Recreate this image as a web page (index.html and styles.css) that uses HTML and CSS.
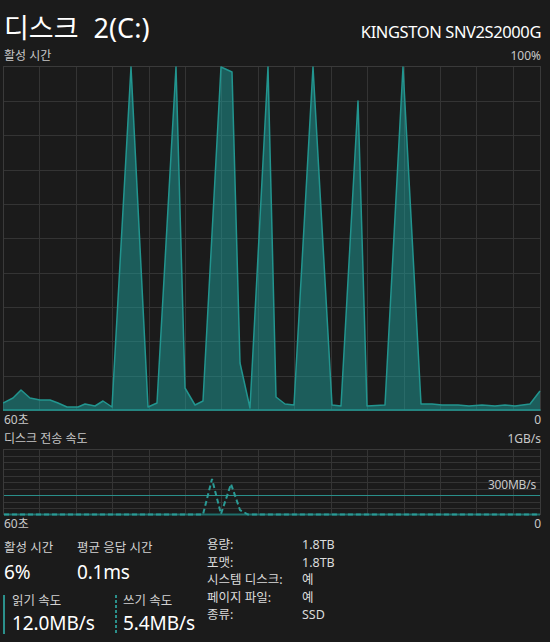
FILE: index.html
```html
<!DOCTYPE html>
<html lang="ko">
<head>
<meta charset="utf-8">
<title>디스크 2(C:)</title>
<link rel="stylesheet" href="styles.css">
</head>
<body>
<main class="page">
  <header class="header">
    <h1 class="title">디스크 2(C:)</h1>
    <div class="model">KINGSTON SNV2S2000G</div>
  </header>

  <div class="axis axis-head"><span>활성 시간</span><span>100%</span></div>
  <svg class="chart chart-main" width="538" height="346" viewBox="3 66 538 346">
    <path class="grid" d="M39.5 66.5V410.5M76.5 66.5V410.5M112.5 66.5V410.5M149.5 66.5V410.5M185.5 66.5V410.5M221.5 66.5V410.5M258.5 66.5V410.5M294.5 66.5V410.5M331.5 66.5V410.5M367.5 66.5V410.5M404.5 66.5V410.5M440.5 66.5V410.5M476.5 66.5V410.5M513.5 66.5V410.5M3.5 101.5H540.5M3.5 135.5H540.5M3.5 170.5H540.5M3.5 204.5H540.5M3.5 238.5H540.5M3.5 273.5H540.5M3.5 307.5H540.5M3.5 341.5H540.5M3.5 376.5H540.5"/>
    <rect class="frame" x="3.5" y="66.5" width="537" height="344"/>
    <polygon class="area" points="3,403 13,398 21,390 30,398 40,400 50,400 58,403 67,407 78,407 85,404 95,406 103,401 112,407 131,67 148,407 157,403 176,67 185,388 195,405 203,401 221,67 232,72 240,363 248,399 250,408 268,67 276,397 285,404 294,405 313,67 332,405 341,406 358,101 367,406 385,405 403,67 421,404 432,404 442,405 458,405 469,406 482,405 495,406 505,405 515,406 530,404 540,391 540,410.5 3,410.5"/>
    <polyline class="line" points="3,403 13,398 21,390 30,398 40,400 50,400 58,403 67,407 78,407 85,404 95,406 103,401 112,407 131,67 148,407 157,403 176,67 185,388 195,405 203,401 221,67 232,72 240,363 248,399 250,408 268,67 276,397 285,404 294,405 313,67 332,405 341,406 358,101 367,406 385,405 403,67 421,404 432,404 442,405 458,405 469,406 482,405 495,406 505,405 515,406 530,404 540,391"/>
    <path class="line" d="M3 410H540.5"/>
  </svg>
  <div class="axis axis-foot"><span>60초</span><span>0</span></div>

  <div class="axis axis-head2"><span>디스크 전송 속도</span><span>1GB/s</span></div>
  <div class="chart-wrap">
    <svg class="chart chart-small" width="538" height="67" viewBox="3 449 538 67">
      <path class="grid" d="M39.5 449.5V514.5M76.5 449.5V514.5M112.5 449.5V514.5M149.5 449.5V514.5M185.5 449.5V514.5M221.5 449.5V514.5M258.5 449.5V514.5M294.5 449.5V514.5M331.5 449.5V514.5M367.5 449.5V514.5M404.5 449.5V514.5M440.5 449.5V514.5M476.5 449.5V514.5M513.5 449.5V514.5M3.5 456.5H540.5M3.5 462.5H540.5M3.5 469.5H540.5M3.5 476.5H540.5M3.5 482.5H540.5M3.5 489.5H540.5M3.5 502.5H540.5M3.5 508.5H540.5"/>
      <rect class="frame" x="3.5" y="449.5" width="537" height="65"/>
      <path class="limit" d="M4 495.5H540"/>
      <path class="read" d="M4 514.5H540"/>
      <polyline class="write" points="4,514.5 203,514.5 212,479 221,514 231,484 240,510 248,514.5 540,514.5"/>
    </svg>
    <span class="limit-label">300MB/s</span>
  </div>
  <div class="axis axis-foot"><span>60초</span><span>0</span></div>

  <section class="stats">
    <div class="perf">
      <div class="perf-row">
        <div class="stat stat-first">
          <div class="stat-label">활성 시간</div>
          <div class="stat-value">6%</div>
        </div>
        <div class="stat">
          <div class="stat-label">평균 응답 시간</div>
          <div class="stat-value">0.1ms</div>
        </div>
      </div>
      <div class="perf-row io-row">
        <div class="io io-read">
          <div class="stat-label">읽기 속도</div>
          <div class="stat-value">12.0MB/s</div>
        </div>
        <div class="io io-write">
          <div class="stat-label">쓰기 속도</div>
          <div class="stat-value">5.4MB/s</div>
        </div>
      </div>
    </div>
    <dl class="props">
      <dt>용량:</dt><dd>1.8TB</dd>
      <dt>포맷:</dt><dd>1.8TB</dd>
      <dt>시스템 디스크:</dt><dd>예</dd>
      <dt>페이지 파일:</dt><dd>예</dd>
      <dt>종류:</dt><dd>SSD</dd>
    </dl>
  </section>
</main>
</body>
</html>
```

FILE: styles.css
```css
html, body {
  margin: 0;
  background: #1b1b1b;
}

body {
  color: #ffffff;
  font-family: "Segoe UI", "Noto Sans", "Noto Sans CJK KR", sans-serif;
  overflow: hidden;
}

.page {
  width: 538px;
  padding: 0 9px 0 3px;
}

.header {
  display: flex;
  justify-content: space-between;
  align-items: baseline;
  height: 48px;
  box-sizing: border-box;
  padding-top: 10px;
}

.title {
  margin: 0 0 0 1px;
  font-size: 27px;
  font-weight: 400;
  line-height: 36px;
  word-spacing: 8px;
  white-space: nowrap;
}

.model {
  font-size: 16.5px;
  line-height: 22px;
  letter-spacing: -0.4px;
  color: #ffffff;
  white-space: nowrap;
}

.axis {
  display: flex;
  justify-content: space-between;
  font-size: 12px;
  line-height: 16px;
  height: 16px;
  color: #c8c8c8;
  padding-left: 1px;
}

.axis-head2 {
  margin-top: 3px;
}

.chart {
  display: block;
}

.chart-main {
  margin-top: 2px;
}

.chart-wrap {
  position: relative;
  margin-top: 2px;
  width: 538px;
  height: 67px;
}

.grid {
  fill: none;
  stroke: #343434;
  stroke-width: 1;
}

.frame {
  fill: none;
  stroke: #3a3a3a;
  stroke-width: 1;
}

.area {
  fill: rgba(30, 160, 155, 0.5);
  stroke: none;
}

.line {
  fill: none;
  stroke: #22958f;
  stroke-width: 1.5;
  stroke-linejoin: round;
}

.limit {
  fill: none;
  stroke: #2a8f8a;
  stroke-width: 1;
}

.read {
  fill: none;
  stroke: #1f6f6b;
  stroke-width: 2;
}

.write {
  fill: none;
  stroke: #2a9a95;
  stroke-width: 2;
  stroke-dasharray: 5 3;
}

.limit-label {
  position: absolute;
  right: 5px;
  top: 28px;
  font-size: 12px;
  line-height: 16px;
  letter-spacing: -0.2px;
  color: #c8c8c8;
}

.stats {
  display: flex;
  margin-top: 7px;
}

.perf {
  width: 204px;
  flex: none;
}

.perf-row {
  display: flex;
}

.stat {
  padding-left: 1px;
}

.stat-first {
  width: 72px;
}

.stat-label {
  font-size: 12.5px;
  line-height: 18px;
  color: #d2d2d2;
  white-space: nowrap;
}

.stat-value {
  font-size: 19px;
  line-height: 24px;
  letter-spacing: -0.2px;
  margin-top: 3px;
  color: #ffffff;
  white-space: nowrap;
}

.io-row {
  margin-top: 9px;
}

.io {
  position: relative;
  padding-left: 9px;
}

.io .stat-label {
  line-height: 16px;
}

.io .stat-value {
  font-size: 19px;
  line-height: 22px;
  letter-spacing: -0.1px;
  margin-top: 3px;
}

.io-read {
  width: 103px;
}

.io::before {
  content: "";
  position: absolute;
  left: 0;
  top: 2px;
  bottom: 0;
  width: 2px;
}

.io-read::before {
  background: #2b908b;
}

.io-write::before {
  background: repeating-linear-gradient(to bottom, #2b908b 0 3px, transparent 3px 5px);
}

.io-write {
  padding-left: 8px;
}

.props {
  margin: -3px 0 0 0;
  display: grid;
  grid-template-columns: 95px auto;
  grid-auto-rows: 17.6px;
  font-size: 12.5px;
  line-height: 17.6px;
  color: #dcdcdc;
}

.props dt,
.props dd {
  margin: 0;
  white-space: nowrap;
}
```
